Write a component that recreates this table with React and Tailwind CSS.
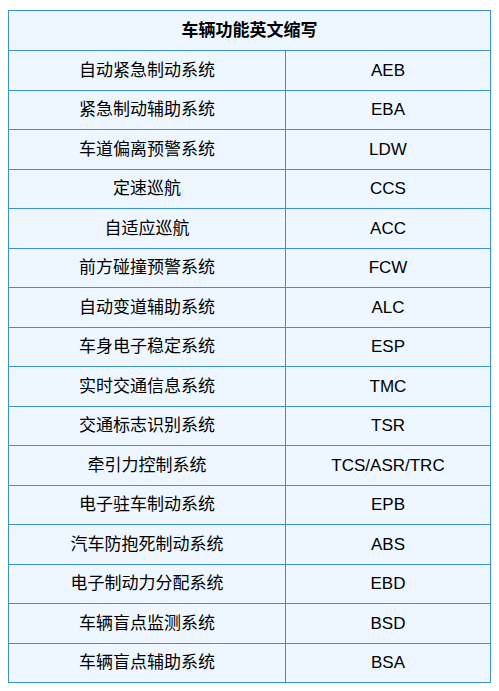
const rows = [
  ["自动紧急制动系统", "AEB"],
  ["紧急制动辅助系统", "EBA"],
  ["车道偏离预警系统", "LDW"],
  ["定速巡航", "CCS"],
  ["自适应巡航", "ACC"],
  ["前方碰撞预警系统", "FCW"],
  ["自动变道辅助系统", "ALC"],
  ["车身电子稳定系统", "ESP"],
  ["实时交通信息系统", "TMC"],
  ["交通标志识别系统", "TSR"],
  ["牵引力控制系统", "TCS/ASR/TRC"],
  ["电子驻车制动系统", "EPB"],
  ["汽车防抱死制动系统", "ABS"],
  ["电子制动力分配系统", "EBD"],
  ["车辆盲点监测系统", "BSD"],
  ["车辆盲点辅助系统", "BSA"],
];

export default function App() {
  return (
    <div
      className="bg-white px-2 pt-[10px] text-black"
      style={{ fontFamily: '"Liberation Sans", "Noto Sans CJK SC", sans-serif' }}
    >
      <table className="w-[483px] border-collapse bg-[#eef7ff] text-[17px]">
        <thead>
          <tr className="h-[40px]">
            <th colSpan={2} className="border border-[#3d8fd6] text-center font-bold">
              车辆功能英文缩写
            </th>
          </tr>
        </thead>
        <tbody>
          {rows.map(([name, abbr]) => (
            <tr key={abbr} className="h-[39.5px]">
              <td className="w-[277px] border border-[#3d8fd6] text-center">{name}</td>
              <td className="border border-[#3d8fd6] text-center">{abbr}</td>
            </tr>
          ))}
        </tbody>
      </table>
    </div>
  );
}
